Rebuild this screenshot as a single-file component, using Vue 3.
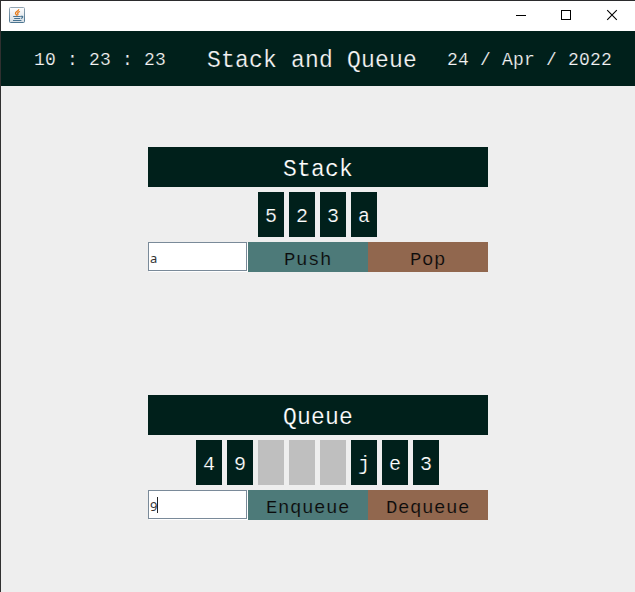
<script setup>
import { ref } from 'vue'

const time = ref('10 : 23 : 23')
const date = ref('24 / Apr / 2022')
const sections = ref([
  { name: 'Stack', cells: ['5', '2', '3', 'a'], value: 'a', focused: false, add: 'Push', remove: 'Pop' },
  { name: 'Queue', cells: ['4', '9', '', '', '', 'j', 'e', '3'], value: '9', focused: true, add: 'Enqueue', remove: 'Dequeue' },
])
</script>

<template>
  <div class="window">
    <div class="titlebar">
      <svg class="java" width="16" height="16" viewBox="0 0 16 16">
        <defs>
          <linearGradient id="tile" x1="0" y1="0" x2="0" y2="1">
            <stop offset="0" stop-color="#ffffff" />
            <stop offset="1" stop-color="#d5dde3" />
          </linearGradient>
          <linearGradient id="edge" x1="0" y1="0" x2="0" y2="1">
            <stop offset="0" stop-color="#93a6b4" />
            <stop offset="1" stop-color="#4c7590" />
          </linearGradient>
        </defs>
        <rect x="0.5" y="0.5" width="15" height="15" rx="1" fill="url(#tile)" stroke="url(#edge)" />
        <path d="M9.8 2.2C9.8 4 6.3 4.5 6.5 6.3C6.6 7.3 7.5 7.6 7.8 8.7M11 4.5C8.7 5.2 8.3 6 8.9 6.9C9.2 7.4 8.8 8 8.4 8.4" fill="none" stroke="#e67a18" stroke-width="1.3" />
        <path d="M4.2 9.5H11.6M5.2 11.5H11M4 13.5H12.4M11.8 9.3C14.6 8.9 14.2 11 11.8 11.5" fill="none" stroke="#477391" stroke-width="1.2" />
      </svg>
      <div class="controls">
        <svg width="46" height="30" viewBox="0 0 46 30"><path d="M18 14.5H28" /></svg>
        <svg width="46" height="30" viewBox="0 0 46 30"><rect x="17.5" y="9.5" width="9" height="9" /></svg>
        <svg width="46" height="30" viewBox="0 0 46 30"><path class="cross" d="M17.2 9.2L26.8 18.8M26.8 9.2L17.2 18.8" /></svg>
      </div>
    </div>
    <header class="banner">
      <span class="time">{{ time }}</span>
      <span class="heading">Stack and Queue</span>
      <span class="date">{{ date }}</span>
    </header>
    <main>
      <section v-for="s in sections" :key="s.name">
        <h2>{{ s.name }}</h2>
        <div class="cells">
          <span v-for="(c, i) in s.cells" :key="i" class="cell" :class="{ empty: !c }">{{ c }}</span>
        </div>
        <div class="actions">
          <div class="field">
            <span>{{ s.value }}</span><i v-if="s.focused" class="caret"></i>
          </div>
          <button class="add">{{ s.add }}</button>
          <button class="remove">{{ s.remove }}</button>
        </div>
      </section>
    </main>
  </div>
</template>

<style>
body {
  margin: 0;
  overflow: hidden;
}
</style>

<style scoped>
.window {
  box-sizing: border-box;
  width: 635px;
  height: 592px;
  border-top: 1px solid #2b2b2d;
  border-left: 1px solid #303030;
  background: #eeeeee;
  font-family: "Courier New", "Liberation Mono", monospace;
}
.titlebar {
  display: flex;
  justify-content: space-between;
  height: 30px;
  background: #fff;
}
.java {
  margin: 6px 0 0 8px;
}
.controls {
  display: flex;
  width: 137px;
}
.controls svg {
  flex: none;
  fill: none;
  stroke: #000;
  stroke-width: 1;
  shape-rendering: crispEdges;
}
.controls .cross {
  shape-rendering: auto;
  stroke-width: 1.1;
}
.banner {
  display: grid;
  grid-template-columns: 173px 243px 1fr;
  box-sizing: border-box;
  height: 55px;
  padding-left: 33px;
  background: #00201b;
  color: #f4f4f4;
  line-height: 58px;
  white-space: pre;
  -webkit-text-stroke: 0.2px #00201b;
}
.time,
.date {
  font-size: 18px;
  letter-spacing: 0.2px;
}
.date {
  margin-left: -3px;
}
.heading {
  font-size: 23px;
  letter-spacing: 0.2px;
  line-height: 60px;
}
h2,
.cell {
  -webkit-text-stroke: 0.2px #00201b;
}
main {
  display: flex;
  flex-direction: column;
  gap: 123px;
  width: 340px;
  margin: 61px 0 0 147px;
}
section {
  display: flex;
  flex-direction: column;
  gap: 5px;
}
h2 {
  height: 40px;
  margin: 0;
  background: #00201b;
  color: #fff;
  font-size: 23px;
  font-weight: 400;
  letter-spacing: 0.2px;
  line-height: 47px;
  text-align: center;
}
.cells {
  display: flex;
  justify-content: center;
  gap: 5px;
  width: 339px;
}
.cell {
  width: 26px;
  height: 45px;
  background: #00201b;
  color: #fff;
  font-size: 20px;
  line-height: 49px;
  text-align: center;
}
.cell.empty {
  background: #bfbfbf;
}
.actions {
  display: flex;
  height: 30px;
}
.field {
  display: flex;
  align-items: center;
  box-sizing: border-box;
  width: 99px;
  height: 29px;
  margin-right: 1px;
  padding: 2px 0 0 1px;
  border: 1px solid #7a8a99;
  background: #fff;
  box-shadow: 1px 1px 0 #fff;
  color: #333;
  font: 13px "Noto Sans", sans-serif;
  letter-spacing: -0.4px;
}
.caret {
  width: 1px;
  height: 16px;
  margin-top: -2px;
  background: #222;
}
button {
  width: 120px;
  height: 30px;
  padding: 2px 0 0;
  border: 0;
  color: #0b0b0b;
  font-family: inherit;
  font-size: 19px;
  letter-spacing: 0.6px;
  line-height: 32px;
}
.add {
  background: #4d7a79;
  -webkit-text-stroke: 0.2px #4d7a79;
}
.remove {
  background: #91674e;
  -webkit-text-stroke: 0.2px #91674e;
}
</style>
